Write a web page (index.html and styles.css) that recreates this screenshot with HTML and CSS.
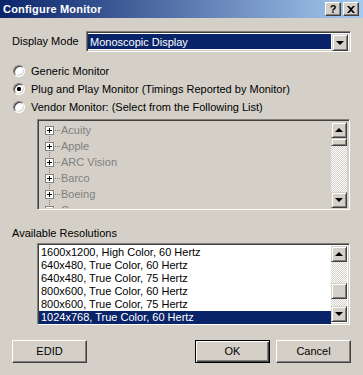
FILE: index.html
```html
<!DOCTYPE html>
<html lang="en">
<head>
    <meta charset="UTF-8">
    <title>Configure Monitor</title>
    <link rel="stylesheet" href="styles.css">
</head>
<body>
    <div class="window">
        <div class="titlebar">
            <span class="title">Configure Monitor</span>
            <span class="tbtn help">?</span>
            <span class="tbtn close">
                <svg width="8" height="7" viewBox="0 0 8 7"><path d="M0 0h2l2 2 2-2h2L5 3.5 8 7H6L4 5 2 7H0l3-3.5z" fill="#000"/></svg>
            </span>
        </div>

        <div class="content">
            <div class="mode-row">
                <span class="mode-label">Display Mode</span>
                <div class="combo">
                    <span class="combo-text">Monoscopic Display</span>
                    <span class="sbtn"><i class="arrow down"></i></span>
                </div>
            </div>

            <div class="radios">
                <div class="radio"><span class="dot"></span>Generic Monitor</div>
                <div class="radio"><span class="dot checked"></span>Plug and Play Monitor (Timings Reported by Monitor)</div>
                <div class="radio"><span class="dot"></span>Vendor Monitor: (Select from the Following List)</div>
            </div>

            <div class="field tree">
                <div class="tree-items">
                    <div class="node"><span class="plus"></span><span class="dots"></span>Acuity</div>
                    <div class="node"><span class="plus"></span><span class="dots"></span>Apple</div>
                    <div class="node"><span class="plus"></span><span class="dots"></span>ARC Vision</div>
                    <div class="node"><span class="plus"></span><span class="dots"></span>Barco</div>
                    <div class="node"><span class="plus"></span><span class="dots"></span>Boeing</div>
                    <div class="node"><span class="plus"></span><span class="dots"></span>Compaq</div>
                </div>
                <div class="scrollbar">
                    <span class="sbtn"><i class="arrow up"></i></span>
                    <span class="thumb small"></span>
                    <span class="track"></span>
                    <span class="sbtn"><i class="arrow down"></i></span>
                </div>
            </div>

            <div class="res-label">Available Resolutions</div>

            <div class="field reslist">
                <ul class="res-items">
                    <li>1600x1200, High Color, 60 Hertz</li>
                    <li>640x480, True Color, 60 Hertz</li>
                    <li>640x480, True Color, 75 Hertz</li>
                    <li>800x600, True Color, 60 Hertz</li>
                    <li>800x600, True Color, 75 Hertz</li>
                    <li class="selected">1024x768, True Color, 60 Hertz</li>
                </ul>
                <div class="scrollbar">
                    <span class="sbtn"><i class="arrow up"></i></span>
                    <span class="track top"></span>
                    <span class="thumb"></span>
                    <span class="track"></span>
                    <span class="sbtn"><i class="arrow down"></i></span>
                </div>
            </div>

            <div class="buttons">
                <span class="btn">EDID</span>
                <span class="spacer"></span>
                <span class="btn default">OK</span>
                <span class="btn">Cancel</span>
            </div>
        </div>
    </div>
</body>
</html>
```

FILE: styles.css
```css
body,
div,
ul,
li {
    margin: 0;
    padding: 0;
}
body {
    background: #d4d0c8;
    font: 11px/13px "Liberation Sans", Arial, sans-serif;
    color: #000;
}
.window {
    width: 363px;
    height: 375px;
    overflow: hidden;
}

/* title bar */
.titlebar {
    height: 18px;
    display: flex;
    align-items: center;
    padding: 0 4px 0 3px;
    background: linear-gradient(to right, #0a246a, #a6caf0);
}
.title {
    flex: 1;
    color: #fff;
    font-weight: bold;
    letter-spacing: 0.2px;
}
.tbtn {
    width: 16px;
    height: 14px;
    box-sizing: border-box;
    display: flex;
    align-items: center;
    justify-content: center;
    background: #d4d0c8;
    border: 1px solid;
    border-color: #fff #404040 #404040 #fff;
    box-shadow: inset -1px -1px #808080;
    font-weight: bold;
    font-size: 11px;
}
.tbtn.help {
    margin-right: 2px;
}

.content {
    padding: 0 12px;
}

/* display mode */
.mode-row {
    display: flex;
    align-items: center;
    margin-top: 13px;
    height: 21px;
}
.mode-label {
    width: 74px;
}
.combo {
    width: 265px;
    height: 21px;
    box-sizing: border-box;
    display: flex;
    border: 1px solid;
    border-color: #808080 #fff #fff #808080;
    box-shadow: inset 1px 1px #404040, inset -1px -1px #d4d0c8;
    padding: 2px 2px 2px 1px;
    background: #fff;
}
.combo-text {
    flex: 1;
    background: #0a246a;
    color: #fff;
    padding-left: 2px;
    margin-right: 1px;
    line-height: 17px;
}
.combo .sbtn {
    height: 17px;
}

/* radios */
.radios {
    margin-top: 10px;
}
.radio {
    height: 18px;
    display: flex;
    align-items: center;
}
.dot {
    width: 12px;
    height: 12px;
    box-sizing: border-box;
    margin: 0 6px 0 1px;
    border-radius: 50%;
    border: 1px solid;
    border-color: #808080 #fff #fff #808080;
    box-shadow: inset 1px 1px #404040, inset -1px -1px #d4d0c8;
    background: #fff;
}
.dot.checked {
    background: radial-gradient(circle, #000 0 2px, #fff 2.3px);
}

/* sunken fields */
.field {
    display: flex;
    margin-left: 25px;
    width: 313px;
    box-sizing: border-box;
    border: 1px solid;
    border-color: #808080 #fff #fff #808080;
    box-shadow: inset 1px 1px #404040, inset -1px -1px #d4d0c8;
    padding: 2px 2px 1px 1px;
}
.tree {
    margin-top: 3px;
    height: 91px;
}
.tree-items {
    flex: 1;
    overflow: hidden;
    color: #808080;
    padding-left: 6px;
    background: repeating-linear-gradient(to bottom, #808080 0 1px, transparent 1px 2px) 10px 12px / 1px 100% no-repeat;
}
.node {
    height: 16px;
    display: flex;
    align-items: center;
}
.plus {
    width: 9px;
    height: 9px;
    box-sizing: border-box;
    border: 1px solid #808080;
    background: #fff linear-gradient(#000, #000) center / 5px 1px no-repeat;
    position: relative;
}
.plus::after {
    content: "";
    position: absolute;
    left: 3px;
    top: 1px;
    width: 1px;
    height: 5px;
    background: #000;
}
.dots {
    width: 6px;
    height: 1px;
    margin-right: 1px;
    background: repeating-linear-gradient(to right, transparent 0 1px, #808080 1px 2px);
}

/* scrollbars */
.scrollbar {
    width: 16px;
    display: flex;
    flex-direction: column;
}
.sbtn,
.thumb {
    width: 16px;
    height: 16px;
    box-sizing: border-box;
    display: flex;
    align-items: center;
    justify-content: center;
    background: #d4d0c8;
    border: 1px solid;
    border-color: #d4d0c8 #404040 #404040 #d4d0c8;
    box-shadow: inset 1px 1px #fff, inset -1px -1px #808080;
}
.thumb.small {
    height: 8px;
}
.track {
    flex: 1;
    background: repeating-conic-gradient(#fff 0 25%, #d4d0c8 0 50%) 0 0 / 2px 2px;
}
.track.top {
    flex: 0 0 21px;
}
.arrow {
    width: 0;
    height: 0;
    border-left: 4px solid transparent;
    border-right: 4px solid transparent;
}
.arrow.up {
    border-bottom: 4px solid #000;
}
.arrow.down {
    border-top: 4px solid #000;
}

/* resolutions */
.res-label {
    margin-top: 17px;
    height: 13px;
}
.reslist {
    margin-top: 3px;
    height: 82px;
    background: #fff;
    padding-bottom: 2px;
}
.res-items {
    flex: 1;
    list-style: none;
}
.res-items li {
    height: 13px;
    padding-left: 2px;
}
.res-items li.selected {
    background: #0a246a;
    color: #fff;
}

/* buttons */
.buttons {
    display: flex;
    margin-top: 15px;
    gap: 6px;
}
.spacer {
    flex: 1;
}
.btn {
    width: 75px;
    height: 23px;
    box-sizing: border-box;
    display: flex;
    align-items: center;
    justify-content: center;
    border: 1px solid;
    border-color: #fff #404040 #404040 #fff;
    box-shadow: inset -1px -1px #808080;
}
.btn.default {
    border-color: #000;
    box-shadow: inset 1px 1px #fff, inset -1px -1px #404040, inset -2px -2px #808080;
}
```
